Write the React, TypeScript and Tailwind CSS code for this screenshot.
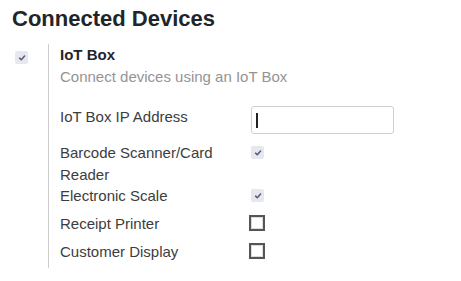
import React from 'react'

const font = { fontFamily: '"Liberation Sans", Arial, sans-serif' }

function CheckedBox() {
  return (
    <span className="flex h-[13px] w-[13px] items-center justify-center rounded-[2px] bg-[#e6e8ee]">
      <svg viewBox="0 0 10 10" className="h-[8px] w-[8px]">
        <path d="M2 5.2 L4.1 7.2 L8.2 2.6" fill="none" stroke="#55597f" strokeWidth="1.9" strokeLinecap="round" strokeLinejoin="round" />
      </svg>
    </span>
  )
}

function EmptyBox() {
  return <span className="block h-[16px] w-[16px] border-2 border-[#555] bg-white shadow-[inset_0_0_0_1px_#dcdcdc]" />
}

interface Row { label: string; value: React.ReactNode; h: string }

export default function App() {
  const rows: Row[] = [
    {
      label: 'IoT Box IP Address',
      h: 'h-[36px]',
      value: (
        <div className="ml-[2px] flex h-[28px] w-[143px] items-center rounded-[3px] border border-[#cfcfcf] bg-white pl-[4px]">
          <span className="block h-[15px] w-[2px] bg-[#222]" />
        </div>
      ),
    },
    { label: 'Barcode Scanner/Card Reader', h: 'h-[43px]', value: <div className="mt-[4px] pl-[2px]"><CheckedBox /></div> },
    { label: 'Electronic Scale', h: 'h-[28px]', value: <div className="mt-[4px] pl-[2px]"><CheckedBox /></div> },
    { label: 'Receipt Printer', h: 'h-[28px]', value: <div className="mt-[2px]"><EmptyBox /></div> },
    { label: 'Customer Display', h: 'h-[28px]', value: <div className="mt-[2px]"><EmptyBox /></div> },
  ]

  return (
    <div className="h-[281px] w-[461px] bg-white pl-[12px] pt-[6px]" style={font}>
      <h2 className="text-[22px] font-bold leading-[26px] text-[#212529]">Connected Devices</h2>

      <div className="mt-[12px] flex">
        {/* left pane: toggle */}
        <div className="w-[36px] pl-[3px] pt-[7px]">
          <CheckedBox />
        </div>

        {/* right pane */}
        <div className="h-[224px] border-l border-[#cccccc] pl-[11px]">
          <div className="text-[15px] font-bold leading-[22px] text-[#212529]">IoT Box</div>
          <div className="text-[15px] leading-[22px] text-[#949494]">Connect devices using an IoT Box</div>

          <div className="mt-[18px]">
            {rows.map((r) => (
              <div key={r.label} className={`flex ${r.h}`}>
                <div className="w-[189px] pr-[20px] text-[15px] leading-[22px] text-[#3d3d3d]">{r.label}</div>
                <div>{r.value}</div>
              </div>
            ))}
          </div>
        </div>
      </div>
    </div>
  )
}
